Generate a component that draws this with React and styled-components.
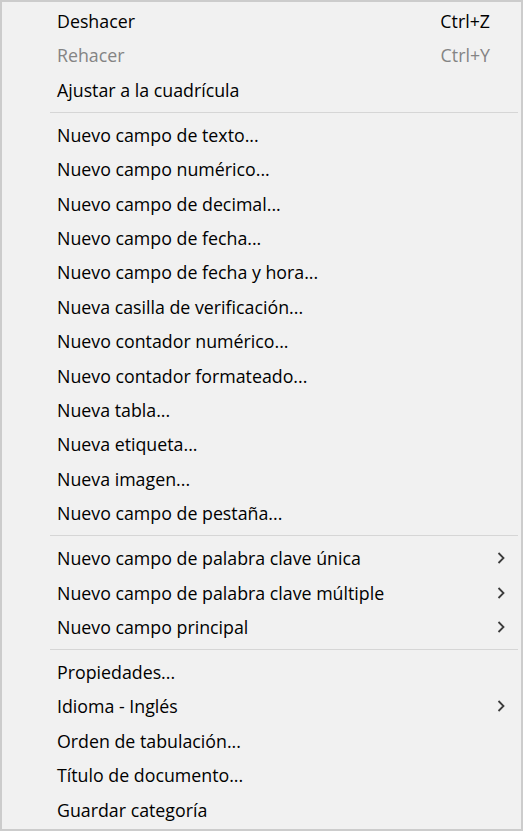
import styled, { createGlobalStyle } from 'styled-components';

const GlobalStyle = createGlobalStyle`
  html, body {
    margin: 0;
    padding: 0;
    background: #ffffff;
  }
`;

const Menu = styled.ul`
  list-style: none;
  margin: 0;
  width: 523px;
  box-sizing: border-box;
  padding: 1.8px 0 2px 0;
  background: #f1f1f1;
  border: 2px solid #cccccc;
  font-family: "Open Sans", "Noto Sans", sans-serif;
  font-size: 17.8px;
  color: #000000;
`;

const Item = styled.li`
  display: grid;
  grid-template-columns: 1fr auto 31px;
  align-items: center;
  height: 34.4px;
  padding-left: 55px;
  color: ${(p) => (p.$disabled ? '#848484' : '#000000')};
  cursor: default;
`;

const Label = styled.span`
  white-space: nowrap;
`;

const Shortcut = styled.span`
  white-space: nowrap;
  text-align: right;
`;

const Arrow = styled.span`
  display: flex;
  align-items: center;
  padding-left: 7px;
  color: #3c3c3c;
`;

const Separator = styled.li`
  height: 1px;
  margin: 4.85px 3px 4.85px 48px;
  background: #d6d6d6;
`;

const Chevron = () => (
  <svg width="8" height="12" viewBox="0 0 8 12" fill="none">
    <path d="M1.5 1 L6.5 6 L1.5 11" stroke="currentColor" strokeWidth="1.8" />
  </svg>
);

const groups = [
  [
    { label: 'Deshacer', shortcut: 'Ctrl+Z' },
    { label: 'Rehacer', shortcut: 'Ctrl+Y', disabled: true },
    { label: 'Ajustar a la cuadrícula' },
  ],
  [
    { label: 'Nuevo campo de texto...' },
    { label: 'Nuevo campo numérico...' },
    { label: 'Nuevo campo de decimal...' },
    { label: 'Nuevo campo de fecha...' },
    { label: 'Nuevo campo de fecha y hora...' },
    { label: 'Nueva casilla de verificación...' },
    { label: 'Nuevo contador numérico...' },
    { label: 'Nuevo contador formateado...' },
    { label: 'Nueva tabla...' },
    { label: 'Nueva etiqueta...' },
    { label: 'Nueva imagen...' },
    { label: 'Nuevo campo de pestaña...' },
  ],
  [
    { label: 'Nuevo campo de palabra clave única', submenu: true },
    { label: 'Nuevo campo de palabra clave múltiple', submenu: true },
    { label: 'Nuevo campo principal', submenu: true },
  ],
  [
    { label: 'Propiedades...' },
    { label: 'Idioma - Inglés', submenu: true },
    { label: 'Orden de tabulación...' },
    { label: 'Título de documento...' },
    { label: 'Guardar categoría' },
  ],
];

function MenuItem({ item }) {
  return (
    <Item $disabled={item.disabled}>
      <Label>{item.label}</Label>
      <Shortcut>{item.shortcut}</Shortcut>
      <Arrow>{item.submenu && <Chevron />}</Arrow>
    </Item>
  );
}

export default function App() {
  return (
    <>
      <GlobalStyle />
      <Menu>
        {groups.map((group, gi) => [
          gi > 0 && <Separator key={`sep-${gi}`} />,
          ...group.map((item) => <MenuItem key={item.label} item={item} />),
        ])}
      </Menu>
    </>
  );
}
